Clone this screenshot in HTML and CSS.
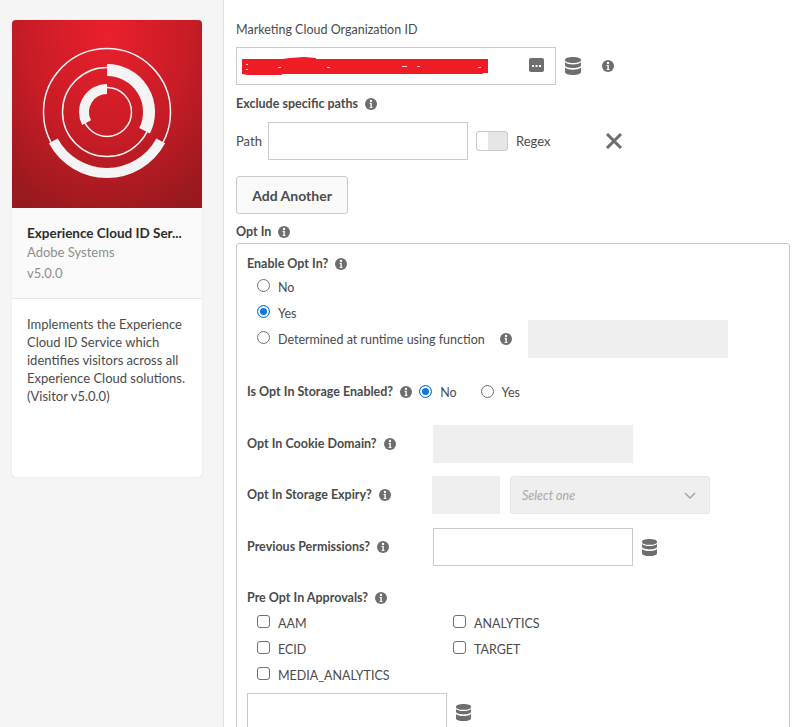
FILE: index.html
```html
<!DOCTYPE html>
<html lang="en">
<head>
    <meta charset="UTF-8">
    <meta name="viewport" content="width=device-width, initial-scale=1.0">
    <title>Experience Cloud ID Service</title>
    <link rel="stylesheet" href="styles.css">
</head>
<body>
    <svg class="sprites" width="0" height="0" aria-hidden="true">
        <symbol id="info" viewBox="0 0 12 12">
            <circle cx="6" cy="6" r="6" fill="#6e6e6e"/>
            <circle cx="6" cy="3" r="1.2" fill="#fff"/>
            <path d="M4.6 5h2.2v4.2h.8v.9H4.5v-.9h.9V5.9h-.8z" fill="#fff"/>
        </symbol>
        <symbol id="db" viewBox="0 0 16 18">
            <path d="M0 3C0 1 3.6 0 8 0s8 1 8 3-3.6 3-8 3-8-1-8-3z" fill="#6e6e6e"/>
            <path d="M0 5.2C1.6 6.800 4.600 7.400 8 7.400s6.400-.6 8-2.200V8c0 2-3.600 3-8 3S0 10 0 8z" fill="#6e6e6e"/>
            <path d="M0 10.600C1.600 12.200 4.600 12.800 8 12.800s6.400-.6 8-2.200V15c0 2-3.600 3-8 3s-8-1-8-3z" fill="#6e6e6e"/>
        </symbol>
    </svg>

    <aside class="sidebar">
        <div class="card">
            <div class="card-image">
                <svg width="190" height="188" viewBox="0 0 190 188" fill="none" stroke="#f4f4f4">
                    <circle cx="95" cy="92" r="63.500" stroke-width="1.500"/>
                    <circle cx="95" cy="92" r="44.500" stroke-width="1.500"/>
                    <circle cx="95" cy="92" r="24.500" stroke-width="1.500"/>
                    <path d="M41.300 120.900A61 61 0 0 0 148.700 120.900" stroke-width="10"/>
                    <path d="M95 50A42 42 0 0 1 132.600 110.800" stroke-width="12"/>
                    <path d="M95 69A23 23 0 0 0 74.600 102.600" stroke-width="10"/>
                </svg>
            </div>
            <div class="card-head">
                <div class="card-title">Experience Cloud ID Ser...</div>
                <div class="card-meta">Adobe Systems</div>
                <div class="card-meta card-version">v5.0.0</div>
            </div>
            <p class="card-desc">Implements the Experience Cloud ID Service which identifies visitors across all Experience Cloud solutions. (Visitor v5.0.0)</p>
        </div>
    </aside>

    <main class="main">
        <div class="label">Marketing Cloud Organization ID</div>
        <div class="org-row">
            <div class="input org-input">
                <svg class="redacted" width="246" height="20" viewBox="0 0 246 20">
                    <path d="M0 3h40l8-1 14-1 12 1v1h172v14h-5v1H40v1H6l-6-1z" fill="#ee1c25"/>
                    <path d="M4 8h2v1H4zM4 13h2v1H4zM36 11h3v1h-3zM85 11h3v1h-3zM160 10h5v1h-5zM175 10h3v1h-3zM236 11h3v1h-3z" fill="#f8d0d0"/>
                </svg>
                <svg class="more-icon" width="16" height="14" viewBox="0 0 16 14">
                    <rect width="15" height="14" rx="2" fill="#6e6e6e"/>
                    <path d="M3 7h2v2H3zM6.500 7h2v2h-2zM10 7h2v2h-2z" fill="#fff"/>
                </svg>
            </div>
            <svg class="db-icon"><use href="#db"/></svg>
            <svg class="info-icon org-info"><use href="#info"/></svg>
        </div>

        <div class="label strong exclude-label">Exclude specific paths <svg class="info-icon"><use href="#info"/></svg></div>
        <div class="path-row">
            <span class="path-label">Path</span>
            <div class="input"></div>
            <span class="switch"><span class="switch-knob"></span></span>
            <span class="regex-label">Regex</span>
            <svg class="close-icon" width="18" height="16" viewBox="0 0 18 16">
                <path d="M2 1l14 14M16 1L2 15" stroke="#6e6e6e" stroke-width="3"/>
            </svg>
        </div>
        <button class="add-button">Add Another</button>

        <div class="label strong optin-label">Opt In <svg class="info-icon"><use href="#info"/></svg></div>
        <section class="optin-box">
            <div class="label strong">Enable Opt In? <svg class="info-icon"><use href="#info"/></svg></div>
            <div class="choice"><span class="radio"></span>No</div>
            <div class="choice"><span class="radio checked"></span>Yes</div>
            <div class="choice">
                <span class="radio"></span>Determined at runtime using function
                <svg class="info-icon runtime-info"><use href="#info"/></svg>
                <div class="input disabled runtime-input"></div>
            </div>

            <div class="storage-row">
                <span class="label strong">Is Opt In Storage Enabled? <svg class="info-icon"><use href="#info"/></svg></span>
                <span class="radio checked"></span><span class="radio-text">No</span>
                <span class="radio second"></span><span class="radio-text">Yes</span>
            </div>

            <div class="field-row cookie-row">
                <span class="label strong field-label">Opt In Cookie Domain? <svg class="info-icon"><use href="#info"/></svg></span>
                <div class="input disabled"></div>
            </div>
            <div class="field-row expiry-row">
                <span class="label strong field-label">Opt In Storage Expiry? <svg class="info-icon"><use href="#info"/></svg></span>
                <div class="input disabled expiry-input"></div>
                <div class="select-box">
                    <span>Select one</span>
                    <svg width="12" height="7" viewBox="0 0 12 7" fill="none" stroke="#a8a8a8" stroke-width="1.500"><path d="M1 1l5 5 5-5"/></svg>
                </div>
            </div>
            <div class="field-row previous-row">
                <span class="label strong field-label">Previous Permissions? <svg class="info-icon"><use href="#info"/></svg></span>
                <div class="input"></div>
                <svg class="db-icon small"><use href="#db"/></svg>
            </div>

            <div class="label strong approvals-label">Pre Opt In Approvals? <svg class="info-icon"><use href="#info"/></svg></div>
            <div class="check-grid">
                <div class="choice"><span class="checkbox"></span>AAM</div>
                <div class="choice"><span class="checkbox"></span>ANALYTICS</div>
                <div class="choice"><span class="checkbox"></span>ECID</div>
                <div class="choice"><span class="checkbox"></span>TARGET</div>
                <div class="choice"><span class="checkbox"></span>MEDIA_ANALYTICS</div>
            </div>
            <div class="last-row">
                <div class="input"></div>
                <svg class="db-icon small"><use href="#db"/></svg>
            </div>
        </section>
    </main>
</body>
</html>
```

FILE: styles.css
```css
html,
body {
    height: 100%;
}

body {
    margin: 0;
    display: flex;
    overflow: hidden;
    font-family: 'Lato', 'Open Sans', sans-serif;
    font-size: 13px;
    color: #4b4b4b;
    background-color: #fff;
}

.sprites {
    position: absolute;
}

/* left rail */
.sidebar {
    width: 223px;
    flex-shrink: 0;
    box-sizing: border-box;
    padding: 20px 0 0 12px;
    background-color: #f5f5f5;
    border-right: 1px solid #e1e1e1;
    box-sizing: content-box;
    padding-right: 0;
    width: 211px;
}

.card {
    width: 190px;
    height: 457px;
    background-color: #fff;
    border-radius: 4px;
    box-shadow: 0 0 1px rgba(0, 0, 0, 0.25);
    overflow: hidden;
}

.card-image {
    height: 188px;
    background: radial-gradient(ellipse 150px 190px at 95px 15px, #ea202c 0%, #c71c26 55%, #98191e 100%);
}

.card-image svg {
    display: block;
}

.card-head {
    height: 91px;
    box-sizing: border-box;
    padding: 16px 15px 0;
    background-color: #fafafa;
    border-bottom: 1px solid #e8e8e8;
}

.card-title {
    font-size: 13.500px;
    font-weight: 700;
    line-height: 18px;
    color: #2c2c2c;
    white-space: nowrap;
}

.card-meta {
    font-size: 13px;
    line-height: 20px;
    color: #8e8e8e;
}

.card-version {
    margin-top: 1px;
}

.card-desc {
    margin: 16px 15px 0;
    font-size: 13px;
    line-height: 18px;
    color: #4b4b4b;
}

/* main form */
.main {
    flex: 1;
    min-width: 0;
    padding: 20px 2px 0 12px;
}

.label {
    line-height: 20px;
    font-size: 12.500px;
}

.strong {
    font-weight: 700;
    color: #4b4b4b;
}

.info-icon {
    width: 12px;
    height: 12px;
    margin-left: 4px;
    vertical-align: -2px;
}

.db-icon {
    width: 16px;
    height: 18px;
}

.db-icon.small {
    margin-left: 9px;
    width: 15px;
    height: 17px;
}

.input {
    width: 200px;
    height: 38px;
    box-sizing: border-box;
    flex-shrink: 0;
    background-color: #fff;
    border: 1px solid #cacaca;
}

.input.disabled {
    background-color: #efefef;
    border-color: #efefef;
}

.org-row {
    margin-top: 7px;
    height: 38px;
    display: flex;
    align-items: center;
}

.org-input {
    width: 320px;
    display: flex;
    align-items: center;
    padding-left: 5px;
}

.redacted {
    display: block;
}

.more-icon {
    margin-left: 41px;
    margin-top: -2px;
}

.org-row .db-icon {
    margin-left: 9px;
}

.org-info {
    margin-left: 21px;
}

.exclude-label {
    margin-top: 9px;
}

.path-row {
    margin-top: 8px;
    display: flex;
    align-items: center;
}

.path-label {
    width: 32px;
}

.switch {
    margin-left: 8px;
    width: 32px;
    height: 20px;
    box-sizing: border-box;
    border: 1px solid #cacaca;
    border-radius: 3px;
    background-color: #e6e6e6;
}

.switch-knob {
    display: block;
    width: 11px;
    height: 18px;
    background-color: #fff;
    border-radius: 3px 0 0 3px;
}

.regex-label {
    margin-left: 8px;
}

.close-icon {
    margin-left: 54px;
}

.add-button {
    display: block;
    margin-top: 16px;
    width: 112px;
    height: 38px;
    padding: 0;
    font-family: inherit;
    font-size: 14px;
    font-weight: 700;
    color: #4b4b4b;
    background-color: #fafafa;
    border: 1px solid #cacaca;
    border-radius: 3px;
}

.optin-label {
    margin-top: 8px;
}

.optin-box {
    margin-top: 1px;
    padding: 10px 10px 0;
    min-height: 500px;
    border: 1px solid #cacaca;
    border-radius: 3px 3px 0 0;
}

.choice {
    height: 26px;
    display: flex;
    align-items: center;
    padding-left: 10px;
    font-size: 12.500px;
}

.radio {
    width: 13px;
    height: 13px;
    box-sizing: border-box;
    flex-shrink: 0;
    margin-right: 8px;
    border: 1px solid #707070;
    border-radius: 50%;
    background-color: #fff;
}

.radio.checked {
    border: 1px solid #1473e6;
    background-color: #1473e6;
    box-shadow: inset 0 0 0 2px #fff;
}

.choice .radio {
    margin-top: -3px;
}

.runtime-info {
    margin-left: 15px;
}

.runtime-input {
    margin-left: 16px;
}

.storage-row {
    margin-top: 30px;
    height: 20px;
    display: flex;
    align-items: center;
}

.storage-row .radio {
    margin-left: 7px;
    margin-top: -2px;
}

.storage-row .radio.second {
    margin-left: 24px;
}

.radio-text {
    font-size: 12.500px;
}

.field-row {
    display: flex;
    align-items: center;
}

.field-label {
    width: 186px;
    flex-shrink: 0;
}

.cookie-row {
    margin-top: 23px;
}

.expiry-row {
    margin-top: 13px;
}

.expiry-input {
    width: 68px;
    margin-left: -1px;
    background-color: #efefef;
    border: 2px solid #e6e6e6;
}

.select-box {
    margin-left: 10px;
    width: 200px;
    height: 38px;
    box-sizing: border-box;
    padding: 0 13px 0 11px;
    display: flex;
    align-items: center;
    justify-content: space-between;
    font-style: italic;
    font-size: 12.500px;
    color: #a8a8a8;
    background-color: #efefef;
    border: 1px solid #e6e6e6;
    border-radius: 3px;
}

.previous-row {
    margin-top: 14px;
}

.approvals-label {
    margin-top: 22px;
}

.check-grid {
    margin-top: 2px;
    display: grid;
    grid-template-columns: 196px 196px;
}

.checkbox {
    width: 13px;
    height: 13px;
    box-sizing: border-box;
    margin-right: 8px;
    margin-top: -3px;
    border: 1px solid #707070;
    border-radius: 3px;
    background-color: #fff;
}

.last-row {
    margin-top: 5px;
    display: flex;
    align-items: center;
}
```
